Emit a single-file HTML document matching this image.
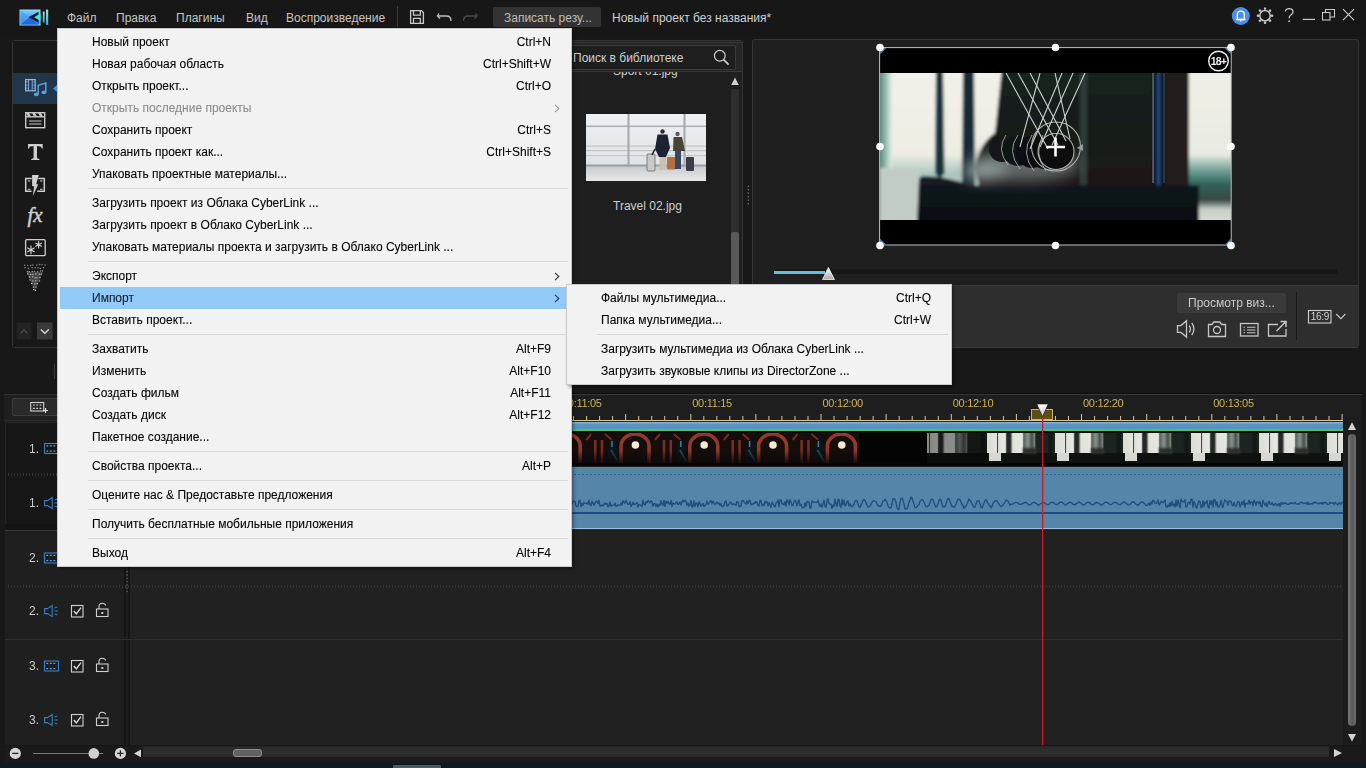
<!DOCTYPE html>
<html><head><meta charset="utf-8"><style>
*{box-sizing:border-box;margin:0;padding:0}
html,body{width:1366px;height:768px;overflow:hidden;background:#181818;font-family:"Liberation Sans",sans-serif;position:relative}
.a{position:absolute}
.t{position:absolute;white-space:nowrap;font-size:12px;line-height:14px}
svg{position:absolute;overflow:visible}
#top{left:0;top:0;width:1366px;height:37px;background:#171717}
.mb{color:#c6c6c6;top:11px}
#lib{left:12px;top:40px;width:731px;height:308px;background:#1f1f1f;border:1px solid #353535;border-radius:3px}
#prev{left:752px;top:39px;width:607px;height:309px;background:#1f1f1f;border:1px solid #353535;border-bottom-color:#3e3e3e;border-radius:3px;overflow:hidden}
#tl{left:5px;top:394px;width:1357px;height:369px;background:#1c1c1c}
#menu{left:57px;top:28px;width:515px;height:539px;background:#f2f2f2;border:1px solid #c9c9c9;box-shadow:2px 2px 3px rgba(0,0,0,.35);z-index:10}
#sub{left:566px;top:284px;width:386px;height:101px;background:#f2f2f2;border:1px solid #c9c9c9;box-shadow:2px 2px 3px rgba(0,0,0,.35);z-index:11}
.mi{position:absolute;left:0;width:100%;height:22px;font-size:12px;line-height:22px;color:#000;-webkit-text-stroke:0.08px #000}
.mi .l{position:absolute;left:34px;top:0;white-space:nowrap}
.mi .r{position:absolute;right:20px;top:0;white-space:nowrap}
.mi.dis{color:#8c8c8c;-webkit-text-stroke:0.08px #8c8c8c}
.mi.hl{color:#0d1d33;-webkit-text-stroke:0.08px #0d1d33}
.sep{position:absolute;left:30px;right:3px;height:1px;background:#d8d8d8}
.chev{position:absolute;right:11px;top:7px;width:6px;height:9px}

</style></head><body>
<div id="top" class="a">
<svg style="left:0;top:0" width="60" height="30">
 <defs><linearGradient id="lg1" x1="0" y1="0" x2="0" y2="1"><stop offset="0" stop-color="#7fd2f7"/><stop offset="0.5" stop-color="#4aa6ee"/><stop offset="1" stop-color="#2a78e6"/></linearGradient>
 <linearGradient id="lg2" x1="0" y1="0" x2="0" y2="1"><stop offset="0" stop-color="#9fe8d8"/><stop offset="1" stop-color="#3aa6e0"/></linearGradient></defs>
 <rect x="20" y="10" width="20" height="15" fill="url(#lg1)" stroke="#8fd8f0" stroke-width="1"/>
 <path d="M20.5 10.5 L30 17.5 L20.5 24.5 Z" fill="#4a9cf0" opacity="0.7"/><path d="M20.5 24.5 L29.5 17.5 L38 24.5 Z" fill="#2468dc"/>
 <path d="M28.5 17.3 L38.5 11.8 L38.5 22.8 Z" fill="#0b1c34"/>
 <path d="M34 17.3 L40.5 13.6 L40.5 21 Z" fill="#3ee6dc"/>
 <rect x="42.8" y="11.5" width="1.8" height="11" fill="url(#lg2)"/>
 <rect x="46" y="9.6" width="2.2" height="15.3" fill="url(#lg2)"/>
</svg>
<span class="t mb" style="left:67px">Файл</span>
<span class="t mb" style="left:116px">Правка</span>
<span class="t mb" style="left:176px">Плагины</span>
<span class="t mb" style="left:246px">Вид</span>
<span class="t mb" style="left:286px">Воспроизведение</span>
<div class="a" style="left:397px;top:6px;width:1px;height:21px;background:#3a3a3a"></div>
<svg style="left:0;top:0" width="500" height="30">
 <g fill="none" stroke="#c8c8c8" stroke-width="1.3">
  <path d="M410.6 10.6 H421.5 L423.4 12.5 V23.4 H410.6 Z"/>
  <path d="M413.5 10.6 V15.2 H420.3 V10.6"/>
  <path d="M413.5 23.4 V18.3 H420.3 V23.4"/>
 </g>
 <path d="M439 13.5 L437.5 16 L440 18.5" fill="none" stroke="#c0c0c0" stroke-width="1.3"/>
 <path d="M437.8 16 H446.5 Q451 16 451 21" fill="none" stroke="#c0c0c0" stroke-width="1.3"/>
 <path d="M475.5 13.5 L477 16 L474.5 18.5" fill="none" stroke="#4a4a4a" stroke-width="1.3"/>
 <path d="M476.7 16 H468 Q463.5 16 463.5 21" fill="none" stroke="#4a4a4a" stroke-width="1.3"/>
</svg>
<div class="a" style="left:493px;top:7px;width:108px;height:20px;background:#333333;border-radius:2px"></div>
<span class="t mb" style="left:504px;color:#bdbdbd">Записать резу...</span>
<span class="t mb" style="left:612px;color:#cfcfcf">Новый проект без названия*</span>
<svg style="left:0;top:0" width="1366" height="30">
 <circle cx="1240.8" cy="16" r="9" fill="#4d8fe6"/>
 <path d="M1237.3 19.5 V14.8 Q1237.3 11.2 1240.8 11.2 Q1244.3 11.2 1244.3 14.8 V19.5 Z" fill="none" stroke="#fff" stroke-width="1.3"/>
 <path d="M1236 19.5 H1245.6" stroke="#fff" stroke-width="1.3"/>
 <path d="M1240.8 19.5 V21.5" stroke="#fff" stroke-width="1.4"/>
 <g transform="translate(1265,15.7)" fill="none" stroke="#c8c8c8">
  <circle r="5.2" stroke-width="1.5"/>
  <g stroke-width="2.2"><path d="M0 -8.2 V-6"/><path d="M0 8.2 V6"/><path d="M-8.2 0 H-6"/><path d="M8.2 0 H6"/><path d="M-5.8 -5.8 L-4.2 -4.2"/><path d="M5.8 5.8 L4.2 4.2"/><path d="M-5.8 5.8 L-4.2 4.2"/><path d="M5.8 -5.8 L4.2 -4.2"/></g>
 </g>
 <path d="M1285.4 11.5 Q1285.6 8.6 1289.2 8.6 Q1293 8.6 1293 11.8 Q1293 13.8 1290.8 15 Q1289.2 15.9 1289.2 18.2" fill="none" stroke="#c8c8c8" stroke-width="1.3"/>
 <circle cx="1289.2" cy="21.2" r="0.9" fill="#c8c8c8"/>
 <path d="M1302.7 19.4 H1315" stroke="#c8c8c8" stroke-width="1.2"/>
 <g fill="none" stroke="#c8c8c8" stroke-width="1.1"><rect x="1322.5" y="12.5" width="7.5" height="7.5"/><path d="M1325.5 12.5 V9.5 H1334.5 V17 H1330"/></g>
 <path d="M1343 9.2 L1354 20.2 M1354 9.2 L1343 20.2" stroke="#c8c8c8" stroke-width="1.2"/>
</svg>
</div>
<div id="lib" class="a"></div>
<div class="a" style="left:13px;top:41px;width:50px;height:306px;background:#181818"></div>
<div class="a" style="left:57px;top:41px;width:685px;height:31px;background:#232323"></div>
<div class="a" style="left:57px;top:42px;width:685px;height:30px;background:#262626;border-top:1px solid #343434;border-bottom:1px solid #363636"></div>
<div class="a" style="left:13px;top:73px;width:50px;height:31px;background:#22364a"></div>
<svg style="left:0;top:0" width="80" height="350">
 <path d="M57.5 84.5 L53 88.5 L57.5 92.5 Z" fill="#3f93d8"/>
 <g fill="none" stroke="#8cbde8" stroke-width="1.2">
  <rect x="25.6" y="79.6" width="9.6" height="11.2"/>
  <path d="M28.6 79.6 V90.8 M32.2 79.6 V90.8" stroke-width="0.9"/>
 </g>
 <g fill="#8cbde8"><rect x="26.4" y="81.3" width="1" height="1.3"/><rect x="26.4" y="84.4" width="1" height="1.3"/><rect x="26.4" y="87.5" width="1" height="1.3"/><rect x="33.6" y="81.3" width="1" height="1.3"/><rect x="33.6" y="84.4" width="1" height="1.3"/><rect x="33.6" y="87.5" width="1" height="1.3"/></g>
 <path d="M38.2 94 V85.2 L45.8 83 V92" fill="none" stroke="#5a9ee0" stroke-width="1.5"/>
 <ellipse cx="36.3" cy="94.3" rx="2.4" ry="1.9" fill="#5a9ee0"/>
 <ellipse cx="43.9" cy="92.3" rx="2.4" ry="1.9" fill="#5a9ee0"/>
 <!-- clapper -->
 <g fill="none" stroke="#c8c8c8" stroke-width="1.4"><rect x="25.7" y="112.7" width="19" height="15"/><path d="M25.7 116.8 H44.7"/><path d="M29 121 H41.5 M29 124 H41.5" stroke-width="1.2"/></g>
 <path d="M26 113 L29 113 L31 116.5 L28 116.5 Z M32 113 L35 113 L37 116.5 L34 116.5 Z M38 113 L41 113 L43 116.5 L40 116.5 Z" fill="#c8c8c8"/>
 <!-- T -->
 <path d="M28 144 H42.7 V148.6 H41.8 Q41.3 146.3 39.2 146.3 H37 V157.4 Q37 158.7 39.4 158.9 V160 H31.2 V158.9 Q33.6 158.7 33.6 157.4 V146.3 H31.4 Q29.3 146.3 28.9 148.6 H28 Z" fill="#cdcdcd"/>
 <!-- transition -->
 <g fill="none" stroke="#cdcdcd" stroke-width="1.5"><path d="M31.8 178.6 H25.7 V191.3 H31.5"/><path d="M38.4 178.6 H44.3 V191.3 H37.2"/></g>
 <path d="M27.8 181 H30.3 M27.8 189.3 H30.3 M40 181 H42.5 M40 189.3 H42.5" stroke="#cdcdcd" stroke-width="1.1"/>
 <path d="M32.1 175 H38.8 L36.2 184.2 H38.3 L32.8 196 L34.2 186.3 H32.1 Z" fill="#d0d0d0"/>
 <!-- fx -->
 <text x="35" y="221.5" font-family="Liberation Serif" font-style="italic" font-size="21" fill="#cdcdcd" stroke="#cdcdcd" stroke-width="0.5" text-anchor="middle">fx</text>
 <!-- particle -->
 <rect x="25.6" y="239.6" width="19.6" height="16" rx="1.2" fill="none" stroke="#cdcdcd" stroke-width="1.3"/>
 <g stroke="#d4d4d4" stroke-width="1.1"><path d="M31 245.6 V254.2 M27.3 247.8 L34.7 252 M34.7 247.8 L27.3 252"/><path d="M38.6 241 V248.4 M35.4 242.9 L41.8 246.5 M41.8 242.9 L35.4 246.5"/></g>
 <!-- cone -->
 <path d="M26.5 272 L43 272 L34.8 290 Z" fill="#9a9a9a" opacity="0.35"/><circle cx="24.6" cy="265.2" r="0.75" fill="#e6e6e6" opacity="0.55"/><circle cx="27.8" cy="265.4" r="0.75" fill="#e6e6e6" opacity="0.55"/><circle cx="30.7" cy="265.4" r="0.75" fill="#e6e6e6" opacity="0.55"/><circle cx="32.8" cy="265.0" r="0.75" fill="#e6e6e6" opacity="0.55"/><circle cx="36.8" cy="265.1" r="0.75" fill="#e6e6e6" opacity="0.55"/><circle cx="39.7" cy="264.6" r="0.75" fill="#e6e6e6" opacity="0.55"/><circle cx="42.1" cy="264.7" r="0.75" fill="#e6e6e6" opacity="0.55"/><circle cx="45.2" cy="265.1" r="0.75" fill="#e6e6e6" opacity="0.55"/><circle cx="25.1" cy="267.8" r="0.75" fill="#e6e6e6" opacity="0.61"/><circle cx="28.5" cy="268.5" r="0.75" fill="#e6e6e6" opacity="0.61"/><circle cx="32.1" cy="267.8" r="0.75" fill="#e6e6e6" opacity="0.61"/><circle cx="35.2" cy="267.7" r="0.75" fill="#e6e6e6" opacity="0.61"/><circle cx="38.0" cy="267.7" r="0.75" fill="#e6e6e6" opacity="0.61"/><circle cx="40.3" cy="268.5" r="0.75" fill="#e6e6e6" opacity="0.61"/><circle cx="43.5" cy="267.8" r="0.75" fill="#e6e6e6" opacity="0.61"/><circle cx="27.5" cy="271.6" r="0.75" fill="#e6e6e6" opacity="0.66"/><circle cx="29.3" cy="271.7" r="0.75" fill="#e6e6e6" opacity="0.66"/><circle cx="32.2" cy="271.4" r="0.75" fill="#e6e6e6" opacity="0.66"/><circle cx="34.4" cy="271.6" r="0.75" fill="#e6e6e6" opacity="0.66"/><circle cx="37.6" cy="271.7" r="0.75" fill="#e6e6e6" opacity="0.66"/><circle cx="40.5" cy="271.0" r="0.75" fill="#e6e6e6" opacity="0.66"/><circle cx="42.5" cy="270.9" r="0.75" fill="#e6e6e6" opacity="0.66"/><circle cx="27.7" cy="273.9" r="0.75" fill="#e6e6e6" opacity="0.72"/><circle cx="30.6" cy="274.4" r="0.75" fill="#e6e6e6" opacity="0.72"/><circle cx="32.9" cy="274.5" r="0.75" fill="#e6e6e6" opacity="0.72"/><circle cx="35.9" cy="274.1" r="0.75" fill="#e6e6e6" opacity="0.72"/><circle cx="39.2" cy="274.3" r="0.75" fill="#e6e6e6" opacity="0.72"/><circle cx="41.2" cy="274.3" r="0.75" fill="#e6e6e6" opacity="0.72"/><circle cx="29.6" cy="277.0" r="0.7" fill="#e6e6e6" opacity="0.78"/><circle cx="32.7" cy="276.9" r="0.7" fill="#e6e6e6" opacity="0.78"/><circle cx="35.1" cy="277.7" r="0.7" fill="#e6e6e6" opacity="0.78"/><circle cx="36.9" cy="277.7" r="0.7" fill="#e6e6e6" opacity="0.78"/><circle cx="40.0" cy="277.5" r="0.7" fill="#e6e6e6" opacity="0.78"/><circle cx="30.0" cy="280.0" r="0.7" fill="#e6e6e6" opacity="0.83"/><circle cx="33.0" cy="281.0" r="0.7" fill="#e6e6e6" opacity="0.83"/><circle cx="35.8" cy="280.8" r="0.7" fill="#e6e6e6" opacity="0.83"/><circle cx="39.5" cy="280.9" r="0.7" fill="#e6e6e6" opacity="0.83"/><circle cx="31.7" cy="283.5" r="0.7" fill="#e6e6e6" opacity="0.89"/><circle cx="34.8" cy="283.9" r="0.7" fill="#e6e6e6" opacity="0.89"/><circle cx="37.3" cy="283.8" r="0.7" fill="#e6e6e6" opacity="0.89"/><circle cx="33.4" cy="287.1" r="0.7" fill="#e6e6e6" opacity="0.94"/><circle cx="36.0" cy="287.1" r="0.7" fill="#e6e6e6" opacity="0.94"/><circle cx="33.8" cy="289.6" r="0.7" fill="#e6e6e6" opacity="1.00"/><circle cx="35.4" cy="290.2" r="0.7" fill="#e6e6e6" opacity="1.00"/>
 <rect x="16.5" y="322.5" width="15" height="17" fill="#232323"/>
 <path d="M20.5 333.5 L24 330 L27.5 333.5" fill="none" stroke="#4a4a4a" stroke-width="1.3"/>
 <rect x="37" y="322.5" width="15.5" height="17" fill="#3a3a3a"/>
 <path d="M40.8 329.5 L44.8 333.3 L48.8 329.5" fill="none" stroke="#d8d8d8" stroke-width="1.4"/>
</svg>
<!-- search box -->
<div class="a" style="left:63px;top:45px;width:673px;height:25px;background:#1e1e1e;border:1px solid #3a3a3a;border-radius:2px"></div>
<span class="t" style="left:573px;top:51px;color:#cfcfcf">Поиск в библиотеке</span>
<svg style="left:0;top:0" width="750" height="80"><circle cx="719.8" cy="55.8" r="5.4" fill="none" stroke="#cfcfcf" stroke-width="1.2"/><path d="M723.6 59.6 L728.6 64.6" stroke="#cfcfcf" stroke-width="1.6"/></svg>
<!-- list -->
<div class="a" style="left:63px;top:72px;width:668px;height:274px;background:#1e1e1e;overflow:hidden">
 <span class="t" style="left:550px;top:-8px;color:#cfcfcf">Sport 01.jpg</span>
 <div class="a" style="left:523px;top:42px;width:120px;height:67px;overflow:hidden"><svg style="left:0;top:0;overflow:hidden" width="120" height="67" viewBox="0 0 120 67">
<defs><filter id="tb"><feGaussianBlur stdDeviation="0.45"/></filter>
<linearGradient id="tbg" x1="0" y1="0" x2="0" y2="1"><stop offset="0" stop-color="#eef0f1"/><stop offset="0.45" stop-color="#e6e9eb"/><stop offset="0.75" stop-color="#dfe3e6"/><stop offset="1" stop-color="#d5d8da"/></linearGradient>
<linearGradient id="flr" x1="0" y1="0" x2="0" y2="1"><stop offset="0" stop-color="#c8cacb"/><stop offset="1" stop-color="#e8e8e8"/></linearGradient></defs>
<g filter="url(#tb)">
<rect width="120" height="67" fill="url(#tbg)"/>
<rect x="0" y="52" width="120" height="15" fill="url(#flr)"/>
<rect x="0" y="11.5" width="120" height="1.6" fill="#aeb2b6"/>
<rect x="0" y="31.5" width="120" height="1.2" fill="#bfc3c6"/>
<rect x="0" y="36" width="120" height="1.2" fill="#c3c6c9"/>
<rect x="0" y="41" width="120" height="1.2" fill="#c6c9cc"/>
<rect x="0" y="50.5" width="120" height="2" fill="#9a9ea2"/>
<rect x="41.5" y="0" width="2" height="53" fill="#a4a8ac"/>
<rect x="97.5" y="0" width="2" height="53" fill="#a4a8ac"/>
<rect x="61" y="40" width="8" height="17" rx="1" fill="#c9c9c9" stroke="#6a6a6a" stroke-width="0.8"/>
<rect x="81" y="43" width="8.5" height="12.5" rx="1" fill="#b07040"/>
<rect x="100" y="43" width="8" height="14" rx="1" fill="#3a3e48"/>
<circle cx="76.5" cy="17.5" r="2.2" fill="#2a2a30"/>
<path d="M71.5 20.5 H81.5 L84 34 L80 43 H73 L69 35 Z" fill="#1e2230"/>
<path d="M69 35 L66 41" stroke="#1e2230" stroke-width="1.5"/>
<rect x="73.5" y="43" width="7" height="13" fill="#c8c0b0"/>
<circle cx="91.5" cy="20" r="2.2" fill="#6a5a50"/>
<path d="M87.5 23 H96 L99 37 H87 Z" fill="#4a4434"/>
<rect x="89" y="37" width="6" height="18" fill="#384660"/>
</g></svg></div>
 <span class="t" style="left:550px;top:127px;color:#cfcfcf">Travel 02.jpg</span>
</div>
<div class="a" style="left:731px;top:89px;width:8px;height:257px;background:#2d2d2d;border-radius:1px"></div>
<div class="a" style="left:731px;top:232px;width:8px;height:114px;background:#595959;border-radius:2px"></div>
<svg style="left:0;top:0" width="760" height="300"><path d="M731.2 85 L735 77.6 L738.8 85 Z" fill="#cfcfcf"/>
<g fill="#6a6a6a"><rect x="747.6" y="185.5" width="1.4" height="1.4"/><rect x="747.6" y="189" width="1.4" height="1.4"/><rect x="747.6" y="192.5" width="1.4" height="1.4"/><rect x="747.6" y="196" width="1.4" height="1.4"/><rect x="747.6" y="199.5" width="1.4" height="1.4"/><rect x="747.6" y="203" width="1.4" height="1.4"/></g></svg>
<div class="a" style="left:54px;top:364px;width:1px;height:15px;background:#3a3a3a"></div>
<div id="prev" class="a">
 <div class="a" style="left:0;top:245px;width:605px;height:1px;background:transparent"></div>
 <div class="a" style="left:0;top:245px;width:605px;height:63px;background:#2e2e2e;border-top:1px solid #3a3a3a"></div>
</div>
<!-- video frame -->
<div class="a" style="left:880px;top:48px;width:351px;height:197px;background:#000;overflow:hidden">
 <svg style="left:-0.4px;top:25px;overflow:hidden" width="352" height="147" viewBox="0 0 352 147">
  <defs>
   <filter id="bl" x="-5%" y="-5%" width="110%" height="110%"><feGaussianBlur stdDeviation="1.8"/></filter>
   <filter id="bl2"><feGaussianBlur stdDeviation="0.6"/></filter><filter id="bl3" x="-50%" y="-50%" width="200%" height="200%"><feGaussianBlur stdDeviation="7"/></filter>
   <linearGradient id="lft" x1="0" y1="0" x2="1" y2="0"><stop offset="0" stop-color="#2f5a54"/><stop offset="0.6" stop-color="#8fb8ac"/><stop offset="1" stop-color="#e6eee6"/></linearGradient>
   <linearGradient id="cr" x1="0" y1="0" x2="0" y2="1"><stop offset="0" stop-color="#f3f0e8"/><stop offset="0.55" stop-color="#eeede4"/><stop offset="0.68" stop-color="#a9c6be"/><stop offset="0.8" stop-color="#c3cdc8"/><stop offset="1" stop-color="#cfd5d0"/></linearGradient>
   <linearGradient id="rt" x1="0" y1="0" x2="0" y2="1"><stop offset="0" stop-color="#f1efe6"/><stop offset="0.55" stop-color="#e8ebe2"/><stop offset="0.66" stop-color="#6a9a90"/><stop offset="0.74" stop-color="#2d635a"/><stop offset="0.84" stop-color="#3a4744"/><stop offset="0.9" stop-color="#c8cfc8"/><stop offset="1" stop-color="#dcdcd4"/></linearGradient>
   <linearGradient id="dk" x1="0" y1="0" x2="0" y2="1"><stop offset="0" stop-color="#16221e"/><stop offset="0.5" stop-color="#141c19"/><stop offset="1" stop-color="#201819"/></linearGradient>
   <linearGradient id="base" x1="0" y1="0" x2="0" y2="1"><stop offset="0" stop-color="#1a2228"/><stop offset="0.3" stop-color="#0f151a"/><stop offset="1" stop-color="#0a0e12"/></linearGradient>
  </defs>
  <g filter="url(#bl)">
   <rect x="-5" y="-5" width="362" height="157" fill="url(#cr)"/>
   <rect x="-5" y="-5" width="17" height="157" fill="url(#lft)"/>
   <rect x="0" y="95" width="40" height="55" fill="#c2ccc7"/>
   <path d="M122 -5 H272 V116 H100 L95 95 Q100 70 115 60 Z" fill="url(#dk)"/>
   <rect x="200" y="-5" width="75" height="120" fill="url(#dk)"/>
   <rect x="284" y="-5" width="28" height="120" fill="#231a1a"/>
   <rect x="309" y="-5" width="48" height="157" fill="url(#rt)"/>
   <path d="M56 -5 H63 L64.5 100 Q60 108 55 100 Z" fill="#17333c"/>
   <path d="M83 -5 H94 L95 114 H82 Z" fill="#182a34"/>
   <rect x="272" y="-5" width="13" height="122" fill="#10161c"/><rect x="277" y="-5" width="3" height="122" fill="#244e84"/>
   <rect x="200" y="-5" width="7" height="118" fill="#2e3a38"/>
   <path d="M39 106 Q40 103 44 103 L60 104 L95 112 H319 V150 H37 Z" fill="url(#base)"/>
  </g>
  <g filter="url(#bl3)"><ellipse cx="145" cy="92" rx="55" ry="16" fill="#5e6666"/><ellipse cx="105" cy="98" rx="22" ry="10" fill="#8a9896"/></g>
  <g filter="url(#bl2)">
   <rect x="272.5" y="0" width="1.2" height="110" fill="#9fb0b8" opacity="0.7"/>
   <rect x="283.5" y="0" width="1" height="110" fill="#8a9aa4" opacity="0.5"/>
   <circle cx="122" cy="76" r="13" fill="#14181a"/>
   <circle cx="138" cy="78" r="15" fill="#101214"/>
   <circle cx="152" cy="79" r="16" fill="#0e1012"/>
   <circle cx="165" cy="79" r="17" fill="#0c0d0f"/>
   <circle cx="176" cy="78.5" r="18" fill="#0a0b0c"/>
   <g fill="none" stroke="#b8bcb8" stroke-width="1" opacity="0.8">
    <path d="M126 62 Q116 76 128 92"/><path d="M138 62 Q126 78 140 96"/><path d="M152 62 Q140 80 154 98"/><path d="M163 62 Q153 80 166 98"/>
   </g>
  </g>
  <g stroke="#dfe8e4" stroke-width="1.1" fill="none" opacity="0.9">
   <path d="M126 0 L168 76"/><path d="M138 0 L178 72"/><path d="M150 0 L186 68"/><path d="M175 0 L190 66"/>
   <path d="M205 0 L172 72"/><path d="M193 0 L160 74"/><path d="M182 0 L150 76"/><path d="M160 0 L140 74"/>
  </g>
 </svg>
 <svg style="left:0;top:0" width="351" height="197">
  <g fill="none" stroke="#c8c8c8" stroke-width="1.1" opacity="0.85">
   <circle cx="176" cy="98.5" r="24.5"/><circle cx="176" cy="103.5" r="18"/>
  </g>
  <path d="M197 100 l6 -4 l0 7z" fill="#9a9a9a"/>
  <path d="M175.5 89.5 V108.5 M166 99 H185" stroke="#fff" stroke-width="2.6"/>
  <circle cx="338.5" cy="13" r="9.8" fill="#000" stroke="#f2f2f2" stroke-width="1.4"/>
  <text x="338.5" y="17.2" font-family="Liberation Sans" font-weight="bold" font-size="10.5" fill="#f2f2f2" text-anchor="middle" letter-spacing="-0.8">18+</text>
 </svg>
</div>
<svg style="left:0;top:0" width="1366" height="350">
 <rect x="879.6" y="47.6" width="351.6" height="197.4" fill="none" stroke="#bdbdbd" stroke-width="1"/>
 <g fill="#3b7cc0"><path d="M880 48 h6.5 l-6.5 6.5z"/><path d="M1231 48 h-6.5 l6.5 6.5z"/><path d="M880 245 h6.5 l-6.5 -6.5z"/><path d="M1231 245 h-6.5 l6.5 -6.5z"/></g>
 <g fill="#fff"><circle cx="880" cy="47.5" r="3.8"/><circle cx="1055.5" cy="47.5" r="3.8"/><circle cx="1231" cy="47.5" r="3.8"/><circle cx="880" cy="146.5" r="3.8"/><circle cx="1231" cy="146.5" r="3.8"/><circle cx="880" cy="245.5" r="3.8"/><circle cx="1055.5" cy="245.5" r="3.8"/><circle cx="1231" cy="245.5" r="3.8"/></g>
 <rect x="774" y="269.5" width="563" height="4.5" fill="#161616" rx="1"/>
 <rect x="774" y="271" width="51" height="3" fill="#6cbcd8"/>
 <defs><linearGradient id="kn" x1="0" y1="0" x2="0" y2="1"><stop offset="0" stop-color="#fff"/><stop offset="1" stop-color="#a8a8a8"/></linearGradient></defs>
 <path d="M828.4 267.5 L834.5 279.5 L822.5 279.5 Z" fill="url(#kn)" stroke="#f0f0f0" stroke-width="0.8"/>
</svg>
<!-- controls -->
<div class="a" style="left:1177px;top:293px;width:109px;height:20px;background:#3a3a3a;border-radius:2px"></div>
<span class="t" style="left:1188px;top:296px;color:#c9c9c9">Просмотр виз...</span>
<div class="a" style="left:1296px;top:292px;width:1px;height:48px;background:#1a1a1a"></div>
<svg style="left:0;top:0" width="1366" height="350">
 <g fill="none" stroke="#c6c6c6" stroke-width="1.3">
  <path d="M1177.5 325.6 H1181 L1186.5 320.8 V337 L1181 332.4 H1177.5 Z"/>
  <path d="M1189.3 325.6 Q1191.5 329 1189.3 332.4"/><path d="M1191.8 322.8 Q1196 329 1191.8 335.2"/>
  <path d="M1208.5 324.5 H1212 L1213.8 322 H1219.8 L1221.6 324.5 H1225.5 V336.5 H1208.5 Z"/>
  <circle cx="1217" cy="330" r="3.5"/>
  <rect x="1240.5" y="323.5" width="17.5" height="12.5"/>
  <path d="M1243.5 327.2 H1245 M1243.5 330 H1245 M1243.5 332.8 H1245 M1247 327.2 H1255.5 M1247 330 H1255.5 M1247 332.8 H1255.5" stroke-width="1.1"/>
  <path d="M1278 324.5 H1268.5 V336 H1286 V329"/>
  <path d="M1276.5 331 L1285.5 322 M1280.5 321.6 H1286 V327" stroke-width="1.5"/>
 </g>
 <rect x="1308.5" y="310.5" width="22.5" height="12.5" fill="none" stroke="#d0d0d0" stroke-width="1.1"/>
 <text x="1319.8" y="320.3" font-family="Liberation Sans" font-size="10" fill="#d6d6d6" text-anchor="middle" letter-spacing="-0.3">16:9</text>
 <path d="M1336.2 314 L1340.8 318.6 L1345.4 314" fill="none" stroke="#c6c6c6" stroke-width="1.2"/>
</svg>
<div id="tl" class="a"></div>
<!-- toolbar left -->
<div class="a" style="left:4px;top:394px;width:121px;height:27px;background:#1f1f1f;border-top:1px solid #303030;border-bottom:1px solid #2c2c2c"></div>
<div class="a" style="left:12px;top:398px;width:60px;height:18px;background:#2a2a2a;border:1px solid #3d3d3d;border-radius:2px"></div>
<svg style="left:0;top:0" width="100" height="420"><g fill="none" stroke="#d0d0d0" stroke-width="1.1"><rect x="30.7" y="402.5" width="13" height="8.5"/></g><path d="M33 405 h1.8 M36.3 405 h1.8 M39.6 405 h1.8 M33 408.4 h1.8 M36.3 408.4 h1.8 M39.6 408.4 h1.8" stroke="#d8d8d8" stroke-width="1.2"/><path d="M43 410.5 h5 M45.5 408 v5" stroke="#e0e0e0" stroke-width="1.2"/></svg>
<!-- ruler -->
<div class="a" style="left:125px;top:393px;width:1237px;height:28px;background:#1e1e1e;border-top:1px solid #0e0e0e"></div><div class="a" style="left:125px;top:394px;width:1237px;height:1px;background:#383838"></div>
<div class="a" style="left:125px;top:420px;width:1218px;height:1px;background:#e2c894"></div><div class="a" style="left:125px;top:421px;width:1218px;height:1px;background:#0a0a0a"></div>
<svg style="left:0;top:0" width="1366" height="430"><rect x="481.8" y="416" width="1" height="4" fill="#dcc894"/><rect x="494.9" y="414" width="1" height="6" fill="#dcc894"/><rect x="507.9" y="416" width="1" height="4" fill="#dcc894"/><rect x="520.9" y="416" width="1" height="4" fill="#dcc894"/><rect x="533.9" y="416" width="1" height="4" fill="#dcc894"/><rect x="547.0" y="416" width="1" height="4" fill="#dcc894"/><rect x="560.0" y="414" width="1" height="6" fill="#dcc894"/><rect x="573.0" y="416" width="1" height="4" fill="#dcc894"/><rect x="586.1" y="416" width="1" height="4" fill="#dcc894"/><rect x="599.1" y="416" width="1" height="4" fill="#dcc894"/><rect x="612.1" y="416" width="1" height="4" fill="#dcc894"/><rect x="625.1" y="414" width="1" height="6" fill="#dcc894"/><rect x="638.2" y="416" width="1" height="4" fill="#dcc894"/><rect x="651.2" y="416" width="1" height="4" fill="#dcc894"/><rect x="664.2" y="416" width="1" height="4" fill="#dcc894"/><rect x="677.2" y="416" width="1" height="4" fill="#dcc894"/><rect x="690.3" y="414" width="1" height="6" fill="#dcc894"/><rect x="703.3" y="416" width="1" height="4" fill="#dcc894"/><rect x="716.3" y="416" width="1" height="4" fill="#dcc894"/><rect x="729.3" y="416" width="1" height="4" fill="#dcc894"/><rect x="742.4" y="416" width="1" height="4" fill="#dcc894"/><rect x="755.4" y="414" width="1" height="6" fill="#dcc894"/><rect x="768.4" y="416" width="1" height="4" fill="#dcc894"/><rect x="781.4" y="416" width="1" height="4" fill="#dcc894"/><rect x="794.5" y="416" width="1" height="4" fill="#dcc894"/><rect x="807.5" y="416" width="1" height="4" fill="#dcc894"/><rect x="820.5" y="414" width="1" height="6" fill="#dcc894"/><rect x="833.5" y="416" width="1" height="4" fill="#dcc894"/><rect x="846.6" y="416" width="1" height="4" fill="#dcc894"/><rect x="859.6" y="416" width="1" height="4" fill="#dcc894"/><rect x="872.6" y="416" width="1" height="4" fill="#dcc894"/><rect x="885.6" y="414" width="1" height="6" fill="#dcc894"/><rect x="898.7" y="416" width="1" height="4" fill="#dcc894"/><rect x="911.7" y="416" width="1" height="4" fill="#dcc894"/><rect x="924.7" y="416" width="1" height="4" fill="#dcc894"/><rect x="937.8" y="416" width="1" height="4" fill="#dcc894"/><rect x="950.8" y="414" width="1" height="6" fill="#dcc894"/><rect x="963.8" y="416" width="1" height="4" fill="#dcc894"/><rect x="976.8" y="416" width="1" height="4" fill="#dcc894"/><rect x="989.9" y="416" width="1" height="4" fill="#dcc894"/><rect x="1002.9" y="416" width="1" height="4" fill="#dcc894"/><rect x="1015.9" y="414" width="1" height="6" fill="#dcc894"/><rect x="1028.9" y="416" width="1" height="4" fill="#dcc894"/><rect x="1042.0" y="416" width="1" height="4" fill="#dcc894"/><rect x="1055.0" y="416" width="1" height="4" fill="#dcc894"/><rect x="1068.0" y="416" width="1" height="4" fill="#dcc894"/><rect x="1081.0" y="414" width="1" height="6" fill="#dcc894"/><rect x="1094.1" y="416" width="1" height="4" fill="#dcc894"/><rect x="1107.1" y="416" width="1" height="4" fill="#dcc894"/><rect x="1120.1" y="416" width="1" height="4" fill="#dcc894"/><rect x="1133.1" y="416" width="1" height="4" fill="#dcc894"/><rect x="1146.2" y="414" width="1" height="6" fill="#dcc894"/><rect x="1159.2" y="416" width="1" height="4" fill="#dcc894"/><rect x="1172.2" y="416" width="1" height="4" fill="#dcc894"/><rect x="1185.2" y="416" width="1" height="4" fill="#dcc894"/><rect x="1198.3" y="416" width="1" height="4" fill="#dcc894"/><rect x="1211.3" y="414" width="1" height="6" fill="#dcc894"/><rect x="1224.3" y="416" width="1" height="4" fill="#dcc894"/><rect x="1237.4" y="416" width="1" height="4" fill="#dcc894"/><rect x="1250.4" y="416" width="1" height="4" fill="#dcc894"/><rect x="1263.4" y="416" width="1" height="4" fill="#dcc894"/><rect x="1276.4" y="414" width="1" height="6" fill="#dcc894"/><rect x="1289.5" y="416" width="1" height="4" fill="#dcc894"/><rect x="1302.5" y="416" width="1" height="4" fill="#dcc894"/><rect x="1315.5" y="416" width="1" height="4" fill="#dcc894"/><rect x="1328.5" y="416" width="1" height="4" fill="#dcc894"/><rect x="1341.6" y="414" width="1" height="6" fill="#dcc894"/></svg><span class="t" style="left:171.2px;top:396px;font-size:11px;letter-spacing:-0.3px;color:#cdb64c">00:09:20</span><span class="t" style="left:301.5px;top:396px;font-size:11px;letter-spacing:-0.3px;color:#cdb64c">00:10:05</span><span class="t" style="left:431.7px;top:396px;font-size:11px;letter-spacing:-0.3px;color:#cdb64c">00:10:15</span><span class="t" style="left:562.0px;top:396px;font-size:11px;letter-spacing:-0.3px;color:#cdb64c">00:11:05</span><span class="t" style="left:692.3px;top:396px;font-size:11px;letter-spacing:-0.3px;color:#cdb64c">00:11:15</span><span class="t" style="left:822.5px;top:396px;font-size:11px;letter-spacing:-0.3px;color:#cdb64c">00:12:00</span><span class="t" style="left:952.8px;top:396px;font-size:11px;letter-spacing:-0.3px;color:#cdb64c">00:12:10</span><span class="t" style="left:1083.0px;top:396px;font-size:11px;letter-spacing:-0.3px;color:#cdb64c">00:12:20</span><span class="t" style="left:1213.3px;top:396px;font-size:11px;letter-spacing:-0.3px;color:#cdb64c">00:13:05</span>
<!-- header column -->
<div class="a" style="left:5px;top:421px;width:120px;height:325px;background:#1f1f1f"></div>
<div class="a" style="left:5px;top:422px;width:120px;height:108px;background:#171717;border:1px solid #262626;border-right:none;border-bottom:none"></div><div class="a" style="left:5px;top:524px;width:120px;height:5px;background:#141414"></div><div class="a" style="left:5px;top:530px;width:120px;height:1px;background:#363636"></div>
<div class="a" style="left:124px;top:421px;width:6px;height:325px;background:#141414"></div>
<div class="a" style="left:126px;top:421px;width:2px;height:325px;background:#1e1e1e"></div>
<svg style="left:0;top:0" width="140" height="760"><g fill="#5c5c5c"><rect x="126.3" y="571.0" width="1.4" height="1.4"/><rect x="126.3" y="574.3" width="1.4" height="1.4"/><rect x="126.3" y="577.6" width="1.4" height="1.4"/><rect x="126.3" y="580.9" width="1.4" height="1.4"/><rect x="126.3" y="584.2" width="1.4" height="1.4"/><rect x="126.3" y="587.5" width="1.4" height="1.4"/><rect x="126.3" y="590.8" width="1.4" height="1.4"/></g></svg>
<!-- content -->
<div class="a" style="left:130px;top:421px;width:1213px;height:325px;background:#212121"></div>
<div class="a" style="left:5px;top:639px;width:1338px;height:1px;background:#303030"></div>
<div class="a" style="left:130px;top:529px;width:1213px;height:1px;background:#2a2a2a"></div>
<div class="a" style="left:8px;top:473px;width:1335px;height:3px;background:repeating-linear-gradient(90deg,#323232 0 1px,transparent 1px 3px)"></div><div class="a" style="left:8px;top:585px;width:1335px;height:3px;background:repeating-linear-gradient(90deg,#323232 0 1px,transparent 1px 3px)"></div>
<!-- clips -->
<div class="a" style="left:130px;top:422px;width:1213px;height:7px;background:linear-gradient(180deg,#8cc4e4 0,#5a96c2 30%,#5690bc 100%)"></div>
<div class="a" style="left:130px;top:429px;width:1213px;height:2px;background:#46c46a"></div>
<div class="a" style="left:130px;top:431px;width:1213px;height:35px;background:#060606"></div>
<div class="a" style="left:130px;top:433px;width:728.8px;height:30px;overflow:hidden"><svg style="left:-130px;top:-433px" width="858.8" height="470"><defs><filter id="rf"><feGaussianBlur stdDeviation="0.7"/></filter><linearGradient id="rsh" x1="0" y1="0" x2="0" y2="1"><stop offset="0" stop-color="#0c0808" stop-opacity="0"/><stop offset="1" stop-color="#0c0808" stop-opacity="0.9"/></linearGradient></defs><g filter="url(#rf)"><rect x="118.4" y="433" width="68.8" height="30" fill="#160c0a"/><path d="M139.4 463 V446 A14 12 0 0 1 167.4 446 V463" fill="none" stroke="#93392a" stroke-width="3.6"/><path d="M120.4 463 V440 M182.4 463 V440" stroke="#7a2e20" stroke-width="2.6"/><path d="M123.4 434 L130.4 440 M178.4 434 L173.4 440" stroke="#7a2c1e" stroke-width="2"/><circle cx="153.8" cy="445" r="3.8" fill="#f2ead2"/><path d="M126.4 463 V448 Q126.4 440 131.4 439 Q136.4 440 136.4 448 V463 Z" fill="#0e1218"/><path d="M130.4 441 V447" stroke="#5a7c98" stroke-width="1.5"/><path d="M129.4 450 L136.4 462" stroke="#2a5470" stroke-width="1.5"/><rect x="187.2" y="433" width="68.8" height="30" fill="#160c0a"/><path d="M208.2 463 V446 A14 12 0 0 1 236.2 446 V463" fill="none" stroke="#93392a" stroke-width="3.6"/><path d="M189.2 463 V440 M251.2 463 V440" stroke="#7a2e20" stroke-width="2.6"/><path d="M192.2 434 L199.2 440 M247.2 434 L242.2 440" stroke="#7a2c1e" stroke-width="2"/><circle cx="222.6" cy="445" r="3.8" fill="#f2ead2"/><path d="M195.2 463 V448 Q195.2 440 200.2 439 Q205.2 440 205.2 448 V463 Z" fill="#0e1218"/><path d="M199.2 441 V447" stroke="#5a7c98" stroke-width="1.5"/><path d="M198.2 450 L205.2 462" stroke="#2a5470" stroke-width="1.5"/><rect x="256.0" y="433" width="68.8" height="30" fill="#160c0a"/><path d="M277.0 463 V446 A14 12 0 0 1 305.0 446 V463" fill="none" stroke="#93392a" stroke-width="3.6"/><path d="M258.0 463 V440 M320.0 463 V440" stroke="#7a2e20" stroke-width="2.6"/><path d="M261.0 434 L268.0 440 M316.0 434 L311.0 440" stroke="#7a2c1e" stroke-width="2"/><circle cx="291.4" cy="445" r="3.8" fill="#f2ead2"/><path d="M264.0 463 V448 Q264.0 440 269.0 439 Q274.0 440 274.0 448 V463 Z" fill="#0e1218"/><path d="M268.0 441 V447" stroke="#5a7c98" stroke-width="1.5"/><path d="M267.0 450 L274.0 462" stroke="#2a5470" stroke-width="1.5"/><rect x="324.8" y="433" width="68.8" height="30" fill="#160c0a"/><path d="M345.8 463 V446 A14 12 0 0 1 373.8 446 V463" fill="none" stroke="#93392a" stroke-width="3.6"/><path d="M326.8 463 V440 M388.8 463 V440" stroke="#7a2e20" stroke-width="2.6"/><path d="M329.8 434 L336.8 440 M384.8 434 L379.8 440" stroke="#7a2c1e" stroke-width="2"/><circle cx="360.2" cy="445" r="3.8" fill="#f2ead2"/><path d="M332.8 463 V448 Q332.8 440 337.8 439 Q342.8 440 342.8 448 V463 Z" fill="#0e1218"/><path d="M336.8 441 V447" stroke="#5a7c98" stroke-width="1.5"/><path d="M335.8 450 L342.8 462" stroke="#2a5470" stroke-width="1.5"/><rect x="393.6" y="433" width="68.8" height="30" fill="#160c0a"/><path d="M414.6 463 V446 A14 12 0 0 1 442.6 446 V463" fill="none" stroke="#93392a" stroke-width="3.6"/><path d="M395.6 463 V440 M457.6 463 V440" stroke="#7a2e20" stroke-width="2.6"/><path d="M398.6 434 L405.6 440 M453.6 434 L448.6 440" stroke="#7a2c1e" stroke-width="2"/><circle cx="429.0" cy="445" r="3.8" fill="#f2ead2"/><path d="M401.6 463 V448 Q401.6 440 406.6 439 Q411.6 440 411.6 448 V463 Z" fill="#0e1218"/><path d="M405.6 441 V447" stroke="#5a7c98" stroke-width="1.5"/><path d="M404.6 450 L411.6 462" stroke="#2a5470" stroke-width="1.5"/><rect x="462.4" y="433" width="68.8" height="30" fill="#160c0a"/><path d="M483.4 463 V446 A14 12 0 0 1 511.4 446 V463" fill="none" stroke="#93392a" stroke-width="3.6"/><path d="M464.4 463 V440 M526.4 463 V440" stroke="#7a2e20" stroke-width="2.6"/><path d="M467.4 434 L474.4 440 M522.4 434 L517.4 440" stroke="#7a2c1e" stroke-width="2"/><circle cx="497.8" cy="445" r="3.8" fill="#f2ead2"/><path d="M470.4 463 V448 Q470.4 440 475.4 439 Q480.4 440 480.4 448 V463 Z" fill="#0e1218"/><path d="M474.4 441 V447" stroke="#5a7c98" stroke-width="1.5"/><path d="M473.4 450 L480.4 462" stroke="#2a5470" stroke-width="1.5"/><rect x="531.2" y="433" width="68.8" height="30" fill="#160c0a"/><path d="M552.2 463 V446 A14 12 0 0 1 580.2 446 V463" fill="none" stroke="#93392a" stroke-width="3.6"/><path d="M533.2 463 V440 M595.2 463 V440" stroke="#7a2e20" stroke-width="2.6"/><path d="M536.2 434 L543.2 440 M591.2 434 L586.2 440" stroke="#7a2c1e" stroke-width="2"/><circle cx="566.6" cy="445" r="3.8" fill="#f2ead2"/><path d="M539.2 463 V448 Q539.2 440 544.2 439 Q549.2 440 549.2 448 V463 Z" fill="#0e1218"/><path d="M543.2 441 V447" stroke="#5a7c98" stroke-width="1.5"/><path d="M542.2 450 L549.2 462" stroke="#2a5470" stroke-width="1.5"/><rect x="600.0" y="433" width="68.8" height="30" fill="#160c0a"/><path d="M621.0 463 V446 A14 12 0 0 1 649.0 446 V463" fill="none" stroke="#93392a" stroke-width="3.6"/><path d="M602.0 463 V440 M664.0 463 V440" stroke="#7a2e20" stroke-width="2.6"/><path d="M605.0 434 L612.0 440 M660.0 434 L655.0 440" stroke="#7a2c1e" stroke-width="2"/><circle cx="635.4" cy="445" r="3.8" fill="#f2ead2"/><path d="M608.0 463 V448 Q608.0 440 613.0 439 Q618.0 440 618.0 448 V463 Z" fill="#0e1218"/><path d="M612.0 441 V447" stroke="#5a7c98" stroke-width="1.5"/><path d="M611.0 450 L618.0 462" stroke="#2a5470" stroke-width="1.5"/><rect x="668.8" y="433" width="68.8" height="30" fill="#160c0a"/><path d="M689.8 463 V446 A14 12 0 0 1 717.8 446 V463" fill="none" stroke="#93392a" stroke-width="3.6"/><path d="M670.8 463 V440 M732.8 463 V440" stroke="#7a2e20" stroke-width="2.6"/><path d="M673.8 434 L680.8 440 M728.8 434 L723.8 440" stroke="#7a2c1e" stroke-width="2"/><circle cx="704.2" cy="445" r="3.8" fill="#f2ead2"/><path d="M676.8 463 V448 Q676.8 440 681.8 439 Q686.8 440 686.8 448 V463 Z" fill="#0e1218"/><path d="M680.8 441 V447" stroke="#5a7c98" stroke-width="1.5"/><path d="M679.8 450 L686.8 462" stroke="#2a5470" stroke-width="1.5"/><rect x="737.6" y="433" width="68.8" height="30" fill="#160c0a"/><path d="M758.6 463 V446 A14 12 0 0 1 786.6 446 V463" fill="none" stroke="#93392a" stroke-width="3.6"/><path d="M739.6 463 V440 M801.6 463 V440" stroke="#7a2e20" stroke-width="2.6"/><path d="M742.6 434 L749.6 440 M797.6 434 L792.6 440" stroke="#7a2c1e" stroke-width="2"/><circle cx="773.0" cy="445" r="3.8" fill="#f2ead2"/><path d="M745.6 463 V448 Q745.6 440 750.6 439 Q755.6 440 755.6 448 V463 Z" fill="#0e1218"/><path d="M749.6 441 V447" stroke="#5a7c98" stroke-width="1.5"/><path d="M748.6 450 L755.6 462" stroke="#2a5470" stroke-width="1.5"/><rect x="806.4" y="433" width="68.8" height="30" fill="#160c0a"/><path d="M827.4 463 V446 A14 12 0 0 1 855.4 446 V463" fill="none" stroke="#93392a" stroke-width="3.6"/><path d="M808.4 463 V440 M870.4 463 V440" stroke="#7a2e20" stroke-width="2.6"/><path d="M811.4 434 L818.4 440 M866.4 434 L861.4 440" stroke="#7a2c1e" stroke-width="2"/><circle cx="841.8" cy="445" r="3.8" fill="#f2ead2"/><path d="M814.4 463 V448 Q814.4 440 819.4 439 Q824.4 440 824.4 448 V463 Z" fill="#0e1218"/><path d="M818.4 441 V447" stroke="#5a7c98" stroke-width="1.5"/><path d="M817.4 450 L824.4 462" stroke="#2a5470" stroke-width="1.5"/></g><rect x="130" y="450" width="729" height="13" fill="url(#rsh)"/></svg></div><div class="a" style="left:858.8px;top:433px;width:68.2px;height:30px;background:#040404"></div><div class="a" style="left:927px;top:433px;width:60px;height:30px;overflow:hidden"><div class="a" style="left:-8px;top:0;width:68px;height:30px;background:linear-gradient(90deg,#dcdcd6 0%,#e4e4de 14%,#3a3e3a 15.5%,#e0e0da 17%,#e8e8e2 27%,#2a2e2c 29%,#1e2220 34%,#e2e2dc 38%,#e6e6e0 52%,#5a605c 54%,#8a908a 60%,#4a504c 66%,#7a807a 70%,#1c2420 72%,#1a2420 88%,#101614 94%,#1e2622 100%);opacity:0.6"></div><div class="a" style="left:0;top:20px;width:60px;height:10px;background:#0a0c0c"></div></div><div class="a" style="left:987.0px;top:433px;width:68.0px;height:30px;overflow:hidden"><div class="a" style="left:0;top:0;width:68px;height:30px;background:linear-gradient(90deg,#dcdcd6 0%,#e4e4de 14%,#3a3e3a 15.5%,#e0e0da 17%,#e8e8e2 27%,#2a2e2c 29%,#1e2220 34%,#e2e2dc 38%,#e6e6e0 52%,#5a605c 54%,#8a908a 60%,#4a504c 66%,#7a807a 70%,#1c2420 72%,#1a2420 88%,#101614 94%,#1e2622 100%)"></div><div class="a" style="left:0;top:20px;width:68px;height:10px;background:#0e1210"></div><div class="a" style="left:2px;top:20px;width:12px;height:8px;background:#d8d8d2;filter:blur(0.5px)"></div><div class="a" style="left:36px;top:15px;width:14px;height:6px;background:#2a302c;filter:blur(0.8px)"></div></div><div class="a" style="left:1055.0px;top:433px;width:68.0px;height:30px;overflow:hidden"><div class="a" style="left:0;top:0;width:68px;height:30px;background:linear-gradient(90deg,#dcdcd6 0%,#e4e4de 14%,#3a3e3a 15.5%,#e0e0da 17%,#e8e8e2 27%,#2a2e2c 29%,#1e2220 34%,#e2e2dc 38%,#e6e6e0 52%,#5a605c 54%,#8a908a 60%,#4a504c 66%,#7a807a 70%,#1c2420 72%,#1a2420 88%,#101614 94%,#1e2622 100%)"></div><div class="a" style="left:0;top:20px;width:68px;height:10px;background:#0e1210"></div><div class="a" style="left:2px;top:20px;width:12px;height:8px;background:#d8d8d2;filter:blur(0.5px)"></div><div class="a" style="left:36px;top:15px;width:14px;height:6px;background:#2a302c;filter:blur(0.8px)"></div></div><div class="a" style="left:1123.0px;top:433px;width:68.0px;height:30px;overflow:hidden"><div class="a" style="left:0;top:0;width:68px;height:30px;background:linear-gradient(90deg,#dcdcd6 0%,#e4e4de 14%,#3a3e3a 15.5%,#e0e0da 17%,#e8e8e2 27%,#2a2e2c 29%,#1e2220 34%,#e2e2dc 38%,#e6e6e0 52%,#5a605c 54%,#8a908a 60%,#4a504c 66%,#7a807a 70%,#1c2420 72%,#1a2420 88%,#101614 94%,#1e2622 100%)"></div><div class="a" style="left:0;top:20px;width:68px;height:10px;background:#0e1210"></div><div class="a" style="left:2px;top:20px;width:12px;height:8px;background:#d8d8d2;filter:blur(0.5px)"></div><div class="a" style="left:36px;top:15px;width:14px;height:6px;background:#2a302c;filter:blur(0.8px)"></div></div><div class="a" style="left:1191.0px;top:433px;width:68.0px;height:30px;overflow:hidden"><div class="a" style="left:0;top:0;width:68px;height:30px;background:linear-gradient(90deg,#dcdcd6 0%,#e4e4de 14%,#3a3e3a 15.5%,#e0e0da 17%,#e8e8e2 27%,#2a2e2c 29%,#1e2220 34%,#e2e2dc 38%,#e6e6e0 52%,#5a605c 54%,#8a908a 60%,#4a504c 66%,#7a807a 70%,#1c2420 72%,#1a2420 88%,#101614 94%,#1e2622 100%)"></div><div class="a" style="left:0;top:20px;width:68px;height:10px;background:#0e1210"></div><div class="a" style="left:2px;top:20px;width:12px;height:8px;background:#d8d8d2;filter:blur(0.5px)"></div><div class="a" style="left:36px;top:15px;width:14px;height:6px;background:#2a302c;filter:blur(0.8px)"></div></div><div class="a" style="left:1259.0px;top:433px;width:68.0px;height:30px;overflow:hidden"><div class="a" style="left:0;top:0;width:68px;height:30px;background:linear-gradient(90deg,#dcdcd6 0%,#e4e4de 14%,#3a3e3a 15.5%,#e0e0da 17%,#e8e8e2 27%,#2a2e2c 29%,#1e2220 34%,#e2e2dc 38%,#e6e6e0 52%,#5a605c 54%,#8a908a 60%,#4a504c 66%,#7a807a 70%,#1c2420 72%,#1a2420 88%,#101614 94%,#1e2622 100%)"></div><div class="a" style="left:0;top:20px;width:68px;height:10px;background:#0e1210"></div><div class="a" style="left:2px;top:20px;width:12px;height:8px;background:#d8d8d2;filter:blur(0.5px)"></div><div class="a" style="left:36px;top:15px;width:14px;height:6px;background:#2a302c;filter:blur(0.8px)"></div></div><div class="a" style="left:1327.0px;top:433px;width:16.0px;height:30px;overflow:hidden"><div class="a" style="left:0;top:0;width:68px;height:30px;background:linear-gradient(90deg,#dcdcd6 0%,#e4e4de 14%,#3a3e3a 15.5%,#e0e0da 17%,#e8e8e2 27%,#2a2e2c 29%,#1e2220 34%,#e2e2dc 38%,#e6e6e0 52%,#5a605c 54%,#8a908a 60%,#4a504c 66%,#7a807a 70%,#1c2420 72%,#1a2420 88%,#101614 94%,#1e2622 100%)"></div><div class="a" style="left:0;top:20px;width:68px;height:10px;background:#0e1210"></div><div class="a" style="left:2px;top:20px;width:12px;height:8px;background:#d8d8d2;filter:blur(0.5px)"></div><div class="a" style="left:36px;top:15px;width:14px;height:6px;background:#2a302c;filter:blur(0.8px)"></div></div>
<div class="a" style="left:130px;top:467px;width:1213px;height:62px;background:#5586aa;border-bottom:1px solid #9fc0dc"></div>
<div class="a" style="left:130px;top:474px;width:1213px;height:1px;background:repeating-linear-gradient(90deg,#2e5f88 0 2px,transparent 2px 4px)"></div>
<div class="a" style="left:130px;top:512px;width:1213px;height:2px;background:#1d4e82"></div>
<svg style="left:0;top:0" width="1366" height="768"><polyline points="130.0,503.2 131.0,503.9 132.0,506.4 133.0,503.3 134.0,503.6 135.0,504.1 136.0,501.4 137.0,503.6 138.0,504.4 139.0,505.5 140.0,500.7 141.0,502.2 142.0,500.7 143.0,505.6 144.0,504.8 145.0,500.4 146.0,506.8 147.0,506.7 148.0,504.5 149.0,504.3 150.0,501.2 151.0,500.2 152.0,503.7 153.0,500.5 154.0,501.4 155.0,501.7 156.0,500.3 157.0,503.3 158.0,503.1 159.0,505.8 160.0,503.6 161.0,504.5 162.0,503.5 163.0,504.6 164.0,503.2 165.0,502.0 166.0,506.9 167.0,506.9 168.0,505.8 169.0,504.9 170.0,502.2 171.0,501.7 172.0,502.1 173.0,500.6 174.0,505.3 175.0,502.8 176.0,505.9 177.0,502.7 178.0,506.6 179.0,505.9 180.0,500.1 181.0,501.5 182.0,506.3 183.0,503.3 184.0,506.8 185.0,502.8 186.0,500.6 187.0,504.4 188.0,505.4 189.0,501.9 190.0,500.7 191.0,502.4 192.0,506.7 193.0,505.3 194.0,500.9 195.0,501.8 196.0,500.8 197.0,500.5 198.0,505.5 199.0,501.3 200.0,503.9 201.0,503.1 202.0,501.4 203.0,505.1 204.0,501.0 205.0,504.5 206.0,500.9 207.0,503.0 208.0,501.5 209.0,501.9 210.0,506.7 211.0,505.6 212.0,502.2 213.0,506.1 214.0,501.5 215.0,502.8 216.0,505.9 217.0,504.5 218.0,500.8 219.0,506.8 220.0,501.6 221.0,501.9 222.0,505.4 223.0,502.3 224.0,502.1 225.0,500.6 226.0,500.7 227.0,504.1 228.0,501.8 229.0,504.2 230.0,502.6 231.0,503.2 232.0,506.6 233.0,503.4 234.0,504.0 235.0,506.0 236.0,501.3 237.0,501.1 238.0,506.3 239.0,505.7 240.0,501.8 241.0,501.4 242.0,505.1 243.0,506.5 244.0,501.4 245.0,506.6 246.0,506.1 247.0,504.2 248.0,503.0 249.0,500.8 250.0,500.4 251.0,506.6 252.0,501.7 253.0,504.9 254.0,501.8 255.0,505.7 256.0,504.2 257.0,502.1 258.0,501.3 259.0,505.0 260.0,500.6 261.0,501.7 262.0,503.9 263.0,505.9 264.0,504.3 265.0,502.0 266.0,506.3 267.0,501.5 268.0,500.2 269.0,501.9 270.0,503.1 271.0,500.5 272.0,501.3 273.0,502.6 274.0,504.0 275.0,501.0 276.0,502.6 277.0,506.2 278.0,506.8 279.0,504.6 280.0,504.8 281.0,504.1 282.0,501.1 283.0,500.3 284.0,500.2 285.0,506.3 286.0,504.9 287.0,506.6 288.0,500.2 289.0,504.4 290.0,503.4 291.0,505.1 292.0,502.3 293.0,506.9 294.0,500.6 295.0,503.8 296.0,505.1 297.0,506.2 298.0,505.1 299.0,504.9 300.0,505.5 301.0,506.3 302.0,502.5 303.0,504.8 304.0,506.2 305.0,506.0 306.0,502.9 307.0,505.5 308.0,506.0 309.0,504.0 310.0,504.3 311.0,502.7 312.0,504.1 313.0,504.2 314.0,500.6 315.0,504.4 316.0,506.9 317.0,506.1 318.0,505.1 319.0,502.7 320.0,505.1 321.0,504.1 322.0,503.1 323.0,505.8 324.0,500.7 325.0,505.2 326.0,500.3 327.0,504.2 328.0,503.4 329.0,501.7 330.0,504.8 331.0,503.5 332.0,504.3 333.0,506.4 334.0,501.8 335.0,500.2 336.0,502.1 337.0,504.7 338.0,501.5 339.0,501.3 340.0,506.3 341.0,504.6 342.0,503.1 343.0,506.2 344.0,502.3 345.0,504.6 346.0,501.4 347.0,503.0 348.0,505.6 349.0,506.3 350.0,506.1 351.0,502.7 352.0,504.1 353.0,502.3 354.0,501.0 355.0,503.5 356.0,505.8 357.0,505.9 358.0,504.9 359.0,506.6 360.0,502.0 361.0,501.3 362.0,503.2 363.0,502.0 364.0,501.6 365.0,502.9 366.0,504.4 367.0,503.5 368.0,502.2 369.0,505.8 370.0,506.8 371.0,503.2 372.0,500.6 373.0,500.3 374.0,506.0 375.0,500.4 376.0,504.9 377.0,504.0 378.0,502.2 379.0,505.5 380.0,500.2 381.0,501.0 382.0,503.2 383.0,500.3 384.0,505.7 385.0,501.7 386.0,501.1 387.0,500.4 388.0,504.4 389.0,503.1 390.0,504.4 391.0,504.6 392.0,505.6 393.0,506.6 394.0,504.8 395.0,501.5 396.0,503.3 397.0,501.3 398.0,500.2 399.0,503.3 400.0,505.0 401.0,501.3 402.0,502.0 403.0,502.5 404.0,504.8 405.0,503.6 406.0,504.3 407.0,505.2 408.0,502.8 409.0,505.5 410.0,506.3 411.0,500.7 412.0,506.4 413.0,505.0 414.0,501.0 415.0,503.2 416.0,504.4 417.0,506.3 418.0,502.7 419.0,504.0 420.0,506.1 421.0,505.5 422.0,506.5 423.0,503.3 424.0,504.5 425.0,501.5 426.0,505.0 427.0,505.7 428.0,504.5 429.0,505.0 430.0,501.6 431.0,506.2 432.0,506.8 433.0,506.7 434.0,503.8 435.0,505.5 436.0,502.3 437.0,506.3 438.0,505.9 439.0,502.5 440.0,500.7 441.0,503.1 442.0,503.8 443.0,505.3 444.0,503.4 445.0,500.3 446.0,505.6 447.0,500.5 448.0,505.5 449.0,501.3 450.0,502.4 451.0,505.5 452.0,501.1 453.0,501.1 454.0,503.6 455.0,505.0 456.0,505.8 457.0,504.8 458.0,506.5 459.0,503.4 460.0,506.6 461.0,500.7 462.0,501.6 463.0,503.7 464.0,502.1 465.0,505.1 466.0,504.4 467.0,503.7 468.0,505.8 469.0,503.9 470.0,502.2 471.0,502.7 472.0,505.8 473.0,506.2 474.0,501.5 475.0,505.9 476.0,506.7 477.0,503.7 478.0,504.0 479.0,501.5 480.0,503.7 481.0,503.5 482.0,504.2 483.0,500.3 484.0,506.7 485.0,503.6 486.0,502.8 487.0,505.5 488.0,503.9 489.0,503.4 490.0,504.8 491.0,500.5 492.0,503.8 493.0,502.9 494.0,506.6 495.0,506.4 496.0,501.9 497.0,503.3 498.0,501.0 499.0,503.0 500.0,505.6 501.0,506.2 502.0,503.3 503.0,502.3 504.0,501.4 505.0,504.3 506.0,506.4 507.0,501.0 508.0,505.4 509.0,500.3 510.0,501.4 511.0,501.6 512.0,504.8 513.0,502.3 514.0,502.5 515.0,504.3 516.0,500.8 517.0,505.1 518.0,500.9 519.0,503.6 520.0,501.8 521.0,501.4 522.0,503.7 523.0,503.1 524.0,502.7 525.0,502.9 526.0,503.7 527.0,501.2 528.0,501.5 529.0,504.4 530.0,504.4 531.0,503.7 532.0,505.9 533.0,504.3 534.0,505.9 535.0,501.7 536.0,505.1 537.0,505.6 538.0,506.2 539.0,502.2 540.0,502.2 541.0,506.4 542.0,501.6 543.0,506.9 544.0,506.1 545.0,501.0 546.0,501.7 547.0,505.0 548.0,501.9 549.0,500.8 550.0,505.8 551.0,503.0 552.0,505.5 553.0,501.0 554.0,502.8 555.0,504.8 556.0,500.2 557.0,501.5 558.0,504.7 559.0,506.3 560.0,506.7 561.0,500.9 562.0,503.5 563.0,505.3 564.0,503.5 565.0,504.8 566.0,501.4 567.0,500.6 568.0,500.8 569.0,500.4 570.0,503.9 571.0,503.6 572.0,504.0 573.0,501.1 574.0,501.4 575.0,501.5 576.0,505.8 577.0,506.8 578.0,506.4 579.0,500.7 580.0,500.5 581.0,506.6 582.0,503.2 583.0,505.3 584.0,502.3 585.0,503.3 586.0,503.6 587.0,503.0 588.0,504.2 589.0,500.2 590.0,504.9 591.0,505.8 592.0,501.3 593.0,503.2 594.0,505.1 595.0,502.9 596.0,501.4 597.0,501.2 598.0,503.6 599.0,500.2 600.0,506.2 601.0,505.6 602.0,504.9 603.0,506.0 604.0,504.4 605.0,502.9 606.0,504.2 607.0,503.5 608.0,506.8 609.0,505.6 610.0,501.9 611.0,506.3 612.0,505.2 613.0,505.4 614.0,505.6 615.0,502.9 616.0,506.2 617.0,506.1 618.0,504.8 619.0,505.3 620.0,505.3 621.0,502.9 622.0,505.0 623.0,500.6 624.0,502.4 625.0,503.3 626.0,500.2 627.0,502.5 628.0,504.4 629.0,504.3 630.0,501.7 631.0,506.5 632.0,504.6 633.0,502.4 634.0,504.6 635.0,504.0 636.0,503.7 637.0,502.7 638.0,506.9 639.0,504.5 640.0,504.9 641.0,505.3 642.0,506.8 643.0,500.3 644.0,504.3 645.0,505.1 646.0,501.8 647.0,502.8 648.0,500.4 649.0,501.4 650.0,502.7 651.0,500.8 652.0,501.8 653.0,506.3 654.0,503.8 655.0,503.6 656.0,506.7 657.0,504.0 658.0,506.9 659.0,504.4 660.0,505.6 661.0,500.6 662.0,504.2 663.0,505.3 664.0,500.4 665.0,506.4 666.0,501.2 667.0,503.3 668.0,501.2 669.0,503.5 670.0,504.3 671.0,500.5 672.0,506.5 673.0,503.0 674.0,503.7 675.0,504.2 676.0,502.6 677.0,502.0 678.0,504.6 679.0,503.9 680.0,502.0 681.0,505.0 682.0,502.1 683.0,500.2 684.0,501.8 685.0,500.4 686.0,501.2 687.0,505.2 688.0,502.8 689.0,506.2 690.0,505.2 691.0,500.4 692.0,506.8 693.0,506.5 694.0,500.6 695.0,506.3 696.0,503.0 697.0,503.3 698.0,506.7 699.0,501.8 700.0,503.6 701.0,506.3 702.0,504.9 703.0,503.3 704.0,506.6 705.0,505.5 706.0,504.2 707.0,501.0 708.0,504.3 709.0,503.2 710.0,501.6 711.0,500.6 712.0,503.7 713.0,501.1 714.0,503.1 715.0,504.6 716.0,503.2 717.0,502.0 718.0,504.0 719.0,503.0 720.0,505.3 721.0,503.7 722.0,506.7 723.0,506.4 724.0,505.0 725.0,501.8 726.0,501.0 727.0,506.1 728.0,505.4 729.0,504.3 730.0,502.6 731.0,502.0 732.0,504.7 733.0,503.9 734.0,504.1 735.0,504.4 736.0,505.2 737.0,501.4 738.0,501.8 739.0,506.7 740.0,506.3 741.0,506.0 742.0,500.4 743.0,500.5 744.0,501.9 745.0,503.0 746.0,504.3 747.0,500.8 748.0,503.8 749.0,500.5 750.0,500.6 751.0,504.7 752.0,503.9 753.0,504.4 754.0,502.6 755.0,503.3 756.0,501.4 757.0,502.4 758.0,505.3 759.0,506.0 760.0,500.4 761.0,500.7 762.0,505.8 763.0,504.4 764.0,505.5 765.0,501.3 766.0,502.9 767.0,501.6 768.0,505.9 769.0,502.5 770.0,504.7 771.0,507.4 772.0,502.1 773.0,503.9 774.0,505.5 775.0,506.9 776.0,502.9 777.0,502.4 778.0,500.1 779.0,506.7 780.0,499.9 781.0,499.9 782.0,504.1 783.0,503.4 784.0,505.1 785.0,501.7 786.0,506.0 787.0,499.7 788.0,500.9 789.0,505.0 790.0,499.7 791.0,501.7 792.0,505.6 793.0,505.3 794.0,501.4 795.0,500.1 796.0,502.1 797.0,505.7 798.0,502.2 799.0,499.8 800.0,505.6 801.0,504.2 802.0,507.6 803.0,507.9 804.0,507.6 805.0,502.9 806.0,506.6 807.0,501.5 808.0,501.6 809.0,502.5 810.0,508.0 811.0,507.6 812.0,500.9 813.0,502.1 814.0,502.1 815.0,502.1 816.0,502.4 817.0,502.3 818.0,500.3 819.0,504.2 820.0,506.6 821.0,503.9 822.0,507.0 823.0,504.2 824.0,500.1 825.0,506.2 826.0,507.4 827.0,501.2 828.0,498.6 829.0,503.7 830.0,504.0 831.0,504.2 832.0,508.3 833.0,505.0 834.0,506.6 835.0,499.1 836.0,504.0 837.0,506.4 838.0,499.4 839.0,499.4 840.0,505.8 841.0,507.4 842.0,499.5 843.0,504.8 844.0,500.1 845.0,505.9 846.0,504.9 847.0,501.1 848.0,500.9 849.0,506.0 850.0,503.7 851.0,506.1 852.0,506.7 853.0,506.0 854.0,504.4 855.0,501.3 856.0,500.2 857.0,501.0 858.0,503.7 859.0,506.5 860.0,507.6 861.0,505.3 862.0,503.0 863.0,500.8 864.0,499.5 865.0,500.5 866.0,502.6 867.0,505.2 868.0,507.1 869.0,506.9 870.0,505.9 871.0,504.4 872.0,502.2 873.0,501.0 874.0,500.4 875.0,501.3 876.0,501.7 877.0,504.0 878.0,505.5 879.0,506.2 880.0,506.5 881.0,506.0 882.0,504.1 883.0,501.2 884.0,500.8 885.0,499.3 886.0,500.6 887.0,501.9 888.0,505.7 889.0,507.3 890.0,507.8 891.0,507.9 892.0,504.1 893.0,498.4 894.0,498.8 895.0,499.2 896.0,502.6 897.0,507.2 898.0,509.5 899.0,508.9 900.0,502.4 901.0,498.8 902.0,498.0 903.0,499.9 904.0,503.8 905.0,508.8 906.0,509.0 907.0,508.9 908.0,506.1 909.0,502.1 910.0,500.0 911.0,497.0 912.0,498.0 913.0,501.6 914.0,504.1 915.0,507.4 916.0,507.7 917.0,506.9 918.0,505.4 919.0,504.2 920.0,501.4 921.0,500.3 922.0,499.4 923.0,500.2 924.0,502.2 925.0,504.6 926.0,506.7 927.0,506.8 928.0,505.9 929.0,505.2 930.0,502.8 931.0,499.8 932.0,498.9 933.0,500.1 934.0,503.0 935.0,505.3 936.0,507.1 937.0,506.3 938.0,504.0 939.0,500.5 940.0,498.9 941.0,500.2 942.0,504.1 943.0,507.0 944.0,506.7 945.0,506.8 946.0,503.6 947.0,500.3 948.0,498.4 949.0,498.7 950.0,501.9 951.0,503.8 952.0,506.6 953.0,506.5 954.0,507.5 955.0,506.1 956.0,504.0 957.0,501.4 958.0,499.0 959.0,499.8 960.0,499.4 961.0,502.0 962.0,504.6 963.0,505.6 964.0,508.4 965.0,506.6 966.0,505.9 967.0,503.5 968.0,501.7 969.0,498.8 970.0,500.2 971.0,501.5 972.0,503.7 973.0,505.9 974.0,507.3 975.0,507.0 976.0,504.1 977.0,501.0 978.0,500.7 979.0,500.9 980.0,503.6 981.0,507.3 982.0,507.9 983.0,505.8 984.0,503.1 985.0,500.9 986.0,499.5 987.0,501.4 988.0,503.0 989.0,505.2 990.0,505.6 991.0,507.8 992.0,506.1 993.0,503.8 994.0,501.9 995.0,501.1 996.0,500.6 997.0,500.9 998.0,502.6 999.0,504.2 1000.0,505.6 1001.0,506.8 1002.0,505.9 1003.0,504.9 1004.0,503.6 1005.0,502.1 1006.0,500.0 1007.0,500.5 1008.0,501.1 1009.0,503.0 1010.0,505.2 1011.0,504.3 1012.0,504.3 1013.0,503.9 1014.0,503.3 1015.0,502.4 1016.0,502.6 1017.0,502.6 1018.0,503.2 1019.0,504.2 1020.0,504.3 1021.0,504.4 1022.0,504.0 1023.0,503.4 1024.0,502.6 1025.0,502.7 1026.0,502.2 1027.0,503.3 1028.0,504.1 1029.0,504.8 1030.0,505.0 1031.0,504.3 1032.0,503.3 1033.0,502.7 1034.0,502.3 1035.0,502.9 1036.0,503.3 1037.0,504.2 1038.0,505.2 1039.0,505.0 1040.0,504.2 1041.0,503.3 1042.0,502.9 1043.0,502.4 1044.0,502.7 1045.0,503.2 1046.0,503.9 1047.0,504.6 1048.0,504.7 1049.0,504.3 1050.0,503.2 1051.0,502.4 1052.0,502.6 1053.0,502.3 1054.0,503.2 1055.0,504.1 1056.0,504.5 1057.0,504.7 1058.0,503.9 1059.0,503.3 1060.0,502.1 1061.0,502.2 1062.0,502.3 1063.0,503.2 1064.0,504.0 1065.0,505.1 1066.0,504.8 1067.0,504.0 1068.0,503.4 1069.0,502.7 1070.0,502.2 1071.0,502.4 1072.0,503.3 1073.0,504.4 1074.0,504.5 1075.0,504.7 1076.0,503.9 1077.0,503.2 1078.0,502.8 1079.0,501.8 1080.0,502.5 1081.0,503.3 1082.0,504.2 1083.0,504.4 1084.0,505.1 1085.0,504.4 1086.0,503.2 1087.0,502.5 1088.0,502.6 1089.0,502.3 1090.0,503.3 1091.0,504.3 1092.0,504.4 1093.0,504.8 1094.0,504.3 1095.0,503.3 1096.0,502.5 1097.0,502.7 1098.0,502.9 1099.0,503.3 1100.0,504.4 1101.0,505.2 1102.0,504.9 1103.0,504.0 1104.0,503.3 1105.0,502.3 1106.0,502.3 1107.0,502.4 1108.0,503.2 1109.0,503.9 1110.0,504.4 1111.0,504.7 1112.0,504.0 1113.0,503.3 1114.0,502.4 1115.0,502.6 1116.0,502.5 1117.0,503.3 1118.0,504.2 1119.0,504.6 1120.0,504.9 1121.0,503.9 1122.0,503.2 1123.0,502.8 1124.0,501.6 1125.0,502.4 1126.0,503.3 1127.0,504.1 1128.0,504.9 1129.0,505.0 1130.0,504.4 1131.0,503.2 1132.0,502.4 1133.0,501.5 1134.0,502.1 1135.0,503.2 1136.0,504.2 1137.0,504.8 1138.0,505.0 1139.0,504.5 1140.0,503.2 1141.0,502.3 1142.0,502.1 1143.0,501.9 1144.0,503.3 1145.0,504.0 1146.0,505.3 1147.0,505.5 1148.0,504.5 1149.0,503.2 1150.0,505.4 1151.0,502.0 1152.0,504.2 1153.0,500.2 1154.0,500.6 1155.0,503.1 1156.0,503.5 1157.0,502.7 1158.0,500.0 1159.0,505.0 1160.0,503.7 1161.0,501.4 1162.0,501.9 1163.0,502.7 1164.0,501.3 1165.0,499.9 1166.0,506.9 1167.0,507.4 1168.0,504.9 1169.0,506.6 1170.0,502.8 1171.0,506.1 1172.0,501.1 1173.0,505.6 1174.0,504.1 1175.0,507.0 1176.0,500.0 1177.0,506.1 1178.0,500.2 1179.0,503.8 1180.0,507.5 1181.0,499.0 1182.0,501.2 1183.0,501.7 1184.0,501.9 1185.0,499.5 1186.0,507.1 1187.0,506.4 1188.0,502.6 1189.0,502.2 1190.0,504.3 1191.0,499.3 1192.0,499.1 1193.0,507.2 1194.0,501.7 1195.0,503.5 1196.0,507.6 1197.0,508.0 1198.0,503.2 1199.0,500.7 1200.0,501.6 1201.0,507.5 1202.0,507.2 1203.0,500.6 1204.0,506.7 1205.0,502.1 1206.0,503.2 1207.0,500.4 1208.0,507.0 1209.0,508.1 1210.0,500.7 1211.0,504.7 1212.0,500.7 1213.0,507.0 1214.0,499.4 1215.0,499.9 1216.0,505.6 1217.0,501.8 1218.0,507.1 1219.0,506.8 1220.0,505.4 1221.0,500.2 1222.0,505.2 1223.0,507.4 1224.0,503.0 1225.0,499.8 1226.0,501.1 1227.0,501.8 1228.0,505.3 1229.0,500.9 1230.0,500.8 1231.0,501.3 1232.0,504.9 1233.0,505.9 1234.0,502.4 1235.0,504.8 1236.0,506.6 1237.0,504.2 1238.0,501.3 1239.0,501.9 1240.0,506.9 1241.0,504.8 1242.0,501.7 1243.0,504.6 1244.0,500.3 1245.0,507.2 1246.0,503.0 1247.0,503.7 1248.0,503.7 1249.0,500.1 1250.0,504.2 1251.0,501.9 1252.0,501.7 1253.0,505.7 1254.0,500.5 1255.0,501.9 1256.0,505.4 1257.0,501.7 1258.0,501.9 1259.0,503.8 1260.0,501.3 1261.0,506.3 1262.0,506.9 1263.0,500.2 1264.0,503.2 1265.0,505.2 1266.0,502.7 1267.0,506.5 1268.0,503.5 1269.0,501.3 1270.0,503.9 1271.0,504.5 1272.0,502.5 1273.0,504.6 1274.0,505.4 1275.0,503.6 1276.0,503.5 1277.0,505.8 1278.0,504.7 1279.0,503.6 1280.0,506.5 1281.0,502.6 1282.0,504.3 1283.0,502.6 1284.0,503.8 1285.0,502.8 1286.0,503.3 1287.0,504.3 1288.0,504.3 1289.0,504.3 1290.0,502.8 1291.0,503.5 1292.0,502.7 1293.0,503.7 1294.0,503.5 1295.0,502.2 1296.0,503.8 1297.0,504.1 1298.0,503.7 1299.0,504.5 1300.0,502.6 1301.0,502.5 1302.0,502.1 1303.0,503.5 1304.0,503.3 1305.0,503.3 1306.0,502.8 1307.0,504.3 1308.0,502.3 1309.0,504.6 1310.0,503.7 1311.0,503.6 1312.0,504.3 1313.0,502.8 1314.0,502.5 1315.0,503.0 1316.0,502.2 1317.0,503.0 1318.0,503.8 1319.0,503.6 1320.0,502.8 1321.0,503.7 1322.0,502.3 1323.0,504.4 1324.0,502.6 1325.0,502.8 1326.0,502.5 1327.0,504.0 1328.0,504.4 1329.0,504.3 1330.0,502.3 1331.0,503.2 1332.0,503.1 1333.0,502.7 1334.0,504.8 1335.0,502.2 1336.0,503.5 1337.0,504.2 1338.0,504.9 1339.0,502.5 1340.0,503.4 1341.0,504.2 1342.0,502.2 1343.0,502.8" fill="none" stroke="#234f7c" stroke-width="1.4" stroke-linejoin="round"/></svg>
<!-- header rows -->
<svg style="left:0;top:0" width="140" height="768"><rect x="44.5" y="443.5" width="14" height="10" fill="none" stroke="#3a7fc4" stroke-width="1.1"/><path d="M46.3 445.8 H56.8 M46.3 451.2 H56.8" stroke="#5a9ad8" stroke-width="1.2" stroke-dasharray="2 1.5"/><rect x="71.5" y="443.0" width="11.5" height="11.5" fill="none" stroke="#cfcfcf" stroke-width="1.1"/><path d="M73.8 448.5 L76.3 451.3 L81 445.1" fill="none" stroke="#d8d8d8" stroke-width="1.4"/><rect x="96.5" y="446.5" width="11.5" height="7.5" fill="none" stroke="#cfcfcf" stroke-width="1.1"/><path d="M99 446.5 V444.0 Q99 440.7 102.2 440.7 Q105.2 440.7 105.6 443.0" fill="none" stroke="#cfcfcf" stroke-width="1.1"/><rect x="101.3" y="449.5" width="2" height="2" fill="#cfcfcf"/><path d="M44.6 500.6 H47.5 L52.2 497.6 V508.6 L47.5 505.6 H44.6 Z" fill="none" stroke="#3a7fc4" stroke-width="1.1"/><path d="M54.5 500 L57.5 499 M54.5 503 H58 M54.5 506 L57.5 507" stroke="#3a7fc4" stroke-width="1"/><rect x="71.5" y="497.5" width="11.5" height="11.5" fill="none" stroke="#cfcfcf" stroke-width="1.1"/><path d="M73.8 503 L76.3 505.8 L81 499.6" fill="none" stroke="#d8d8d8" stroke-width="1.4"/><rect x="96.5" y="501.0" width="11.5" height="7.5" fill="none" stroke="#cfcfcf" stroke-width="1.1"/><path d="M99 501.0 V498.5 Q99 495.2 102.2 495.2 Q105.2 495.2 105.6 497.5" fill="none" stroke="#cfcfcf" stroke-width="1.1"/><rect x="101.3" y="504.0" width="2" height="2" fill="#cfcfcf"/><rect x="44.5" y="553.0" width="14" height="10" fill="none" stroke="#3a7fc4" stroke-width="1.1"/><path d="M46.3 555.3 H56.8 M46.3 560.7 H56.8" stroke="#5a9ad8" stroke-width="1.2" stroke-dasharray="2 1.5"/><rect x="71.5" y="552.5" width="11.5" height="11.5" fill="none" stroke="#cfcfcf" stroke-width="1.1"/><path d="M73.8 558 L76.3 560.8 L81 554.6" fill="none" stroke="#d8d8d8" stroke-width="1.4"/><rect x="96.5" y="556.0" width="11.5" height="7.5" fill="none" stroke="#cfcfcf" stroke-width="1.1"/><path d="M99 556.0 V553.5 Q99 550.2 102.2 550.2 Q105.2 550.2 105.6 552.5" fill="none" stroke="#cfcfcf" stroke-width="1.1"/><rect x="101.3" y="559.0" width="2" height="2" fill="#cfcfcf"/><path d="M44.6 608.6 H47.5 L52.2 605.6 V616.6 L47.5 613.6 H44.6 Z" fill="none" stroke="#3a7fc4" stroke-width="1.1"/><path d="M54.5 608 L57.5 607 M54.5 611 H58 M54.5 614 L57.5 615" stroke="#3a7fc4" stroke-width="1"/><rect x="71.5" y="605.5" width="11.5" height="11.5" fill="none" stroke="#cfcfcf" stroke-width="1.1"/><path d="M73.8 611 L76.3 613.8 L81 607.6" fill="none" stroke="#d8d8d8" stroke-width="1.4"/><rect x="96.5" y="609.0" width="11.5" height="7.5" fill="none" stroke="#cfcfcf" stroke-width="1.1"/><path d="M99 609.0 V606.5 Q99 603.2 102.2 603.2 Q105.2 603.2 105.6 605.5" fill="none" stroke="#cfcfcf" stroke-width="1.1"/><rect x="101.3" y="612.0" width="2" height="2" fill="#cfcfcf"/><rect x="44.5" y="661.0" width="14" height="10" fill="none" stroke="#3a7fc4" stroke-width="1.1"/><path d="M46.3 663.3 H56.8 M46.3 668.7 H56.8" stroke="#5a9ad8" stroke-width="1.2" stroke-dasharray="2 1.5"/><rect x="71.5" y="660.5" width="11.5" height="11.5" fill="none" stroke="#cfcfcf" stroke-width="1.1"/><path d="M73.8 666 L76.3 668.8 L81 662.6" fill="none" stroke="#d8d8d8" stroke-width="1.4"/><rect x="96.5" y="664.0" width="11.5" height="7.5" fill="none" stroke="#cfcfcf" stroke-width="1.1"/><path d="M99 664.0 V661.5 Q99 658.2 102.2 658.2 Q105.2 658.2 105.6 660.5" fill="none" stroke="#cfcfcf" stroke-width="1.1"/><rect x="101.3" y="667.0" width="2" height="2" fill="#cfcfcf"/><path d="M44.6 717.6 H47.5 L52.2 714.6 V725.6 L47.5 722.6 H44.6 Z" fill="none" stroke="#3a7fc4" stroke-width="1.1"/><path d="M54.5 717 L57.5 716 M54.5 720 H58 M54.5 723 L57.5 724" stroke="#3a7fc4" stroke-width="1"/><rect x="71.5" y="714.5" width="11.5" height="11.5" fill="none" stroke="#cfcfcf" stroke-width="1.1"/><path d="M73.8 720 L76.3 722.8 L81 716.6" fill="none" stroke="#d8d8d8" stroke-width="1.4"/><rect x="96.5" y="718.0" width="11.5" height="7.5" fill="none" stroke="#cfcfcf" stroke-width="1.1"/><path d="M99 718.0 V715.5 Q99 712.2 102.2 712.2 Q105.2 712.2 105.6 714.5" fill="none" stroke="#cfcfcf" stroke-width="1.1"/><rect x="101.3" y="721.0" width="2" height="2" fill="#cfcfcf"/></svg><span class="t" style="left:29px;top:441.5px;color:#cacaca">1.</span><span class="t" style="left:29px;top:496.0px;color:#cacaca">1.</span><span class="t" style="left:29px;top:551.0px;color:#cacaca">2.</span><span class="t" style="left:29px;top:604.0px;color:#cacaca">2.</span><span class="t" style="left:29px;top:659.0px;color:#cacaca">3.</span><span class="t" style="left:29px;top:713.0px;color:#cacaca">3.</span>
<!-- playhead -->
<svg style="left:0;top:0" width="1366" height="768">
 <rect x="1031.5" y="409.5" width="21" height="10" fill="#5b5012" stroke="#c9b46a" stroke-width="1"/>
 <defs><linearGradient id="ph" x1="0" y1="0" x2="0" y2="1"><stop offset="0" stop-color="#fff"/><stop offset="1" stop-color="#bdbdbd"/></linearGradient></defs>
 <path d="M1036.8 404 H1048.2 L1042.5 416.8 Z" fill="url(#ph)" stroke="#111" stroke-width="0.6"/>
 <rect x="1042" y="417" width="1.3" height="328" fill="#c81e28"/>
</svg>
<!-- vertical scrollbar -->
<div class="a" style="left:1343px;top:421px;width:19px;height:325px;background:#1c1c1c"></div>
<div class="a" style="left:1348px;top:434px;width:8px;height:292px;background:linear-gradient(90deg,#7a7a7a,#5e5e5e 40%,#5a5a5a 60%,#6e6e6e);border-radius:4px"></div>
<svg style="left:0;top:0" width="1366" height="768"><path d="M1348 430 L1352 422.3 L1356 430 Z" fill="#d4d4d4"/><path d="M1348 734 L1352 741.5 L1356 734 Z" fill="#d4d4d4"/></svg>
<!-- bottom bar -->
<div class="a" style="left:5px;top:745px;width:1357px;height:1px;background:#161616"></div>
<div class="a" style="left:5px;top:746px;width:1357px;height:17px;background:#1a1a1a"></div>
<div class="a" style="left:143px;top:746px;width:1186px;height:11px;background:linear-gradient(180deg,#262626,#2e2e2e 40%,#2c2c2c)"></div>
<div class="a" style="left:233px;top:749px;width:29px;height:8px;background:#626262;border:1px solid #8e8e8e;border-radius:3px"></div>
<svg style="left:0;top:0" width="1366" height="768">
 <circle cx="15.3" cy="753.4" r="5.6" fill="#d6d6d6"/><path d="M12.2 753.4 H18.4" stroke="#222" stroke-width="1.3"/>
 <path d="M33 753.5 H103" stroke="#777" stroke-width="1"/>
 <circle cx="93.8" cy="753.4" r="5.3" fill="#d0d0d0"/>
 <circle cx="120.4" cy="753.4" r="5.6" fill="#d6d6d6"/><path d="M117.2 753.4 H123.6 M120.4 750.2 V756.6" stroke="#222" stroke-width="1.3"/>
 <path d="M134 753.4 L141 749.5 L141 757.3 Z" fill="#d4d4d4"/>
 <path d="M1342 753 L1334 749 L1334 757 Z" fill="#d4d4d4"/>
</svg>
<div class="a" style="left:0;top:763px;width:1366px;height:5px;background:#0e1a21"></div>
<div class="a" style="left:393px;top:765px;width:48px;height:3px;background:#4c5a62;border-radius:1px 1px 0 0"></div>
<div id="menu" class="a"><div class="mi " style="top:2px"><span class="l">Новый проект</span><span class="r">Ctrl+N</span></div><div class="mi " style="top:24px"><span class="l">Новая рабочая область</span><span class="r">Ctrl+Shift+W</span></div><div class="mi " style="top:46px"><span class="l">Открыть проект...</span><span class="r">Ctrl+O</span></div><div class="mi dis" style="top:68px"><span class="l">Открыть последние проекты</span><svg class="chev" viewBox="0 0 6 9" width="6" height="9"><path d="M1 0.8 L4.8 4.5 L1 8.2" fill="none" stroke="#9a9a9a" stroke-width="1.1"/></svg></div><div class="mi " style="top:90px"><span class="l">Сохранить проект</span><span class="r">Ctrl+S</span></div><div class="mi " style="top:112px"><span class="l">Сохранить проект как...</span><span class="r">Ctrl+Shift+S</span></div><div class="mi " style="top:134px"><span class="l">Упаковать проектные материалы...</span></div><div class="sep" style="top:159px"></div><div class="mi " style="top:163px"><span class="l">Загрузить проект из Облака CyberLink ...</span></div><div class="mi " style="top:185px"><span class="l">Загрузить проект в Облако CyberLink ...</span></div><div class="mi " style="top:207px"><span class="l">Упаковать материалы проекта и загрузить в Облако CyberLink ...</span></div><div class="sep" style="top:232px"></div><div class="mi " style="top:236px"><span class="l">Экспорт</span><svg class="chev" viewBox="0 0 6 9" width="6" height="9"><path d="M1 0.8 L4.8 4.5 L1 8.2" fill="none" stroke="#333" stroke-width="1.1"/></svg></div><div class="a" style="left:2px;top:258px;width:506px;height:22px;background:#91c9f7"></div><div class="mi hl" style="top:258px"><span class="l">Импорт</span><svg class="chev" viewBox="0 0 6 9" width="6" height="9"><path d="M1 0.8 L4.8 4.5 L1 8.2" fill="none" stroke="#1d3c66" stroke-width="1.1"/></svg></div><div class="mi " style="top:280px"><span class="l">Вставить проект...</span></div><div class="sep" style="top:305px"></div><div class="mi " style="top:309px"><span class="l">Захватить</span><span class="r">Alt+F9</span></div><div class="mi " style="top:331px"><span class="l">Изменить</span><span class="r">Alt+F10</span></div><div class="mi " style="top:353px"><span class="l">Создать фильм</span><span class="r">Alt+F11</span></div><div class="mi " style="top:375px"><span class="l">Создать диск</span><span class="r">Alt+F12</span></div><div class="mi " style="top:397px"><span class="l">Пакетное создание...</span></div><div class="sep" style="top:422px"></div><div class="mi " style="top:426px"><span class="l">Свойства проекта...</span><span class="r">Alt+P</span></div><div class="sep" style="top:451px"></div><div class="mi " style="top:455px"><span class="l">Оцените нас &amp; Предоставьте предложения</span></div><div class="sep" style="top:480px"></div><div class="mi " style="top:484px"><span class="l">Получить бесплатные мобильные приложения</span></div><div class="sep" style="top:509px"></div><div class="mi " style="top:513px"><span class="l">Выход</span><span class="r">Alt+F4</span></div></div>
<div id="sub" class="a"><div class="mi " style="top:2px"><span class="l">Файлы мультимедиа...</span><span class="r">Ctrl+Q</span></div><div class="mi " style="top:24px"><span class="l">Папка мультимедиа...</span><span class="r">Ctrl+W</span></div><div class="sep" style="top:49px"></div><div class="mi " style="top:53px"><span class="l">Загрузить мультимедиа из Облака CyberLink ...</span></div><div class="mi " style="top:75px"><span class="l">Загрузить звуковые клипы из DirectorZone ...</span></div></div>

</body></html>
